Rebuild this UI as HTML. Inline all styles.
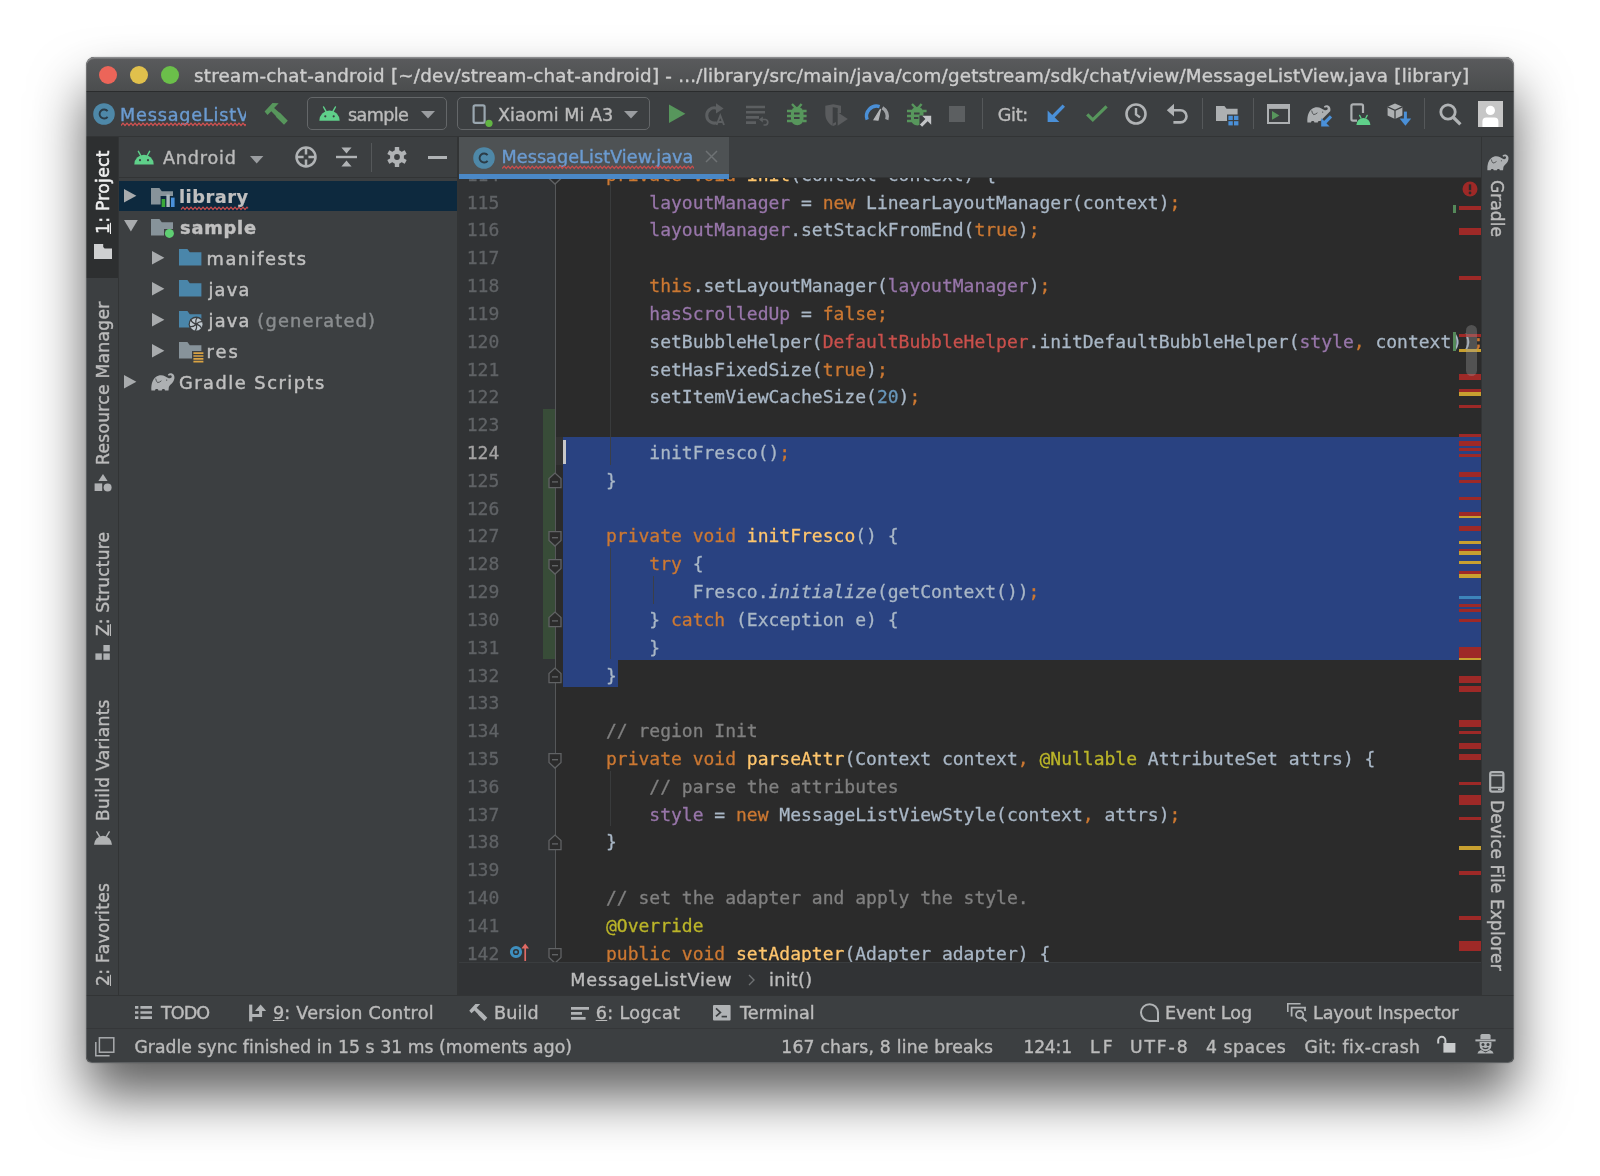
<!DOCTYPE html>
<html>
<head>
<meta charset="utf-8">
<title>MessageListView.java</title>
<style>
html,body{margin:0;padding:0;}
body{width:1600px;height:1176px;background:#fff;overflow:hidden;position:relative;font-family:"DejaVu Sans","Liberation Sans",sans-serif;font-size:17.6px;color:#bbbbbb;}
#shadow{position:absolute;left:86px;top:57px;width:1428px;height:1006px;border-radius:8.5px 8.5px 6px 6px;box-shadow:0 33px 54px rgba(0,0,0,0.63),0 0 1.5px rgba(0,0,0,0.3);}
#win{position:absolute;left:86px;top:57px;width:1428px;height:1006px;border-radius:8.5px 8.5px 6px 6px;overflow:hidden;background:#3c3f41;}
#pg{position:absolute;left:-86px;top:-57px;width:1600px;height:1176px;will-change:transform;-webkit-text-stroke:0.3px;}
.a{position:absolute;}
.t{position:absolute;white-space:nowrap;line-height:22px;height:22px;-webkit-text-stroke:0.4px;}
svg{position:absolute;overflow:visible;}
/* title */
#title{left:86px;top:57px;width:1428px;height:34px;background:linear-gradient(#5a5b5d,#4b4d4e);}
#titletxt{left:194px;top:64.8px;font-size:18.3px;color:#cdcdcd;}
.tl{position:absolute;width:18px;height:18px;border-radius:50%;top:66px;}
/* toolbar */
#toolbar{left:86px;top:92px;width:1428px;height:44px;background:#3c3f41;}
.combo{position:absolute;top:97px;height:33px;border:1.5px solid #646769;border-radius:5px;box-sizing:border-box;}
.sep{position:absolute;width:1px;background:#55585a;}
/* stripes */
.vt{position:absolute;white-space:nowrap;font-size:17.2px;line-height:20px;height:20px;color:#bbbbbb;transform-origin:0 0;-webkit-text-stroke:0.4px;}
/* tree */
.row{position:absolute;left:119px;width:338px;height:31px;}
.tr{position:absolute;white-space:nowrap;font-size:17.8px;line-height:24px;color:#c0c0c0;-webkit-text-stroke:0.45px;}
/* editor */
#code{position:absolute;left:0;top:0;font-family:"DejaVu Sans Mono","Liberation Mono",monospace;font-size:18px;color:#a9b7c6;}
.ln{position:absolute;left:459px;width:40.3px;text-align:right;color:#606366;font-family:"DejaVu Sans Mono",monospace;font-size:18px;line-height:28px;height:28px;white-space:pre;}
.cl{position:absolute;left:562.6px;white-space:pre;line-height:28px;height:28px;font-family:"DejaVu Sans Mono",monospace;font-size:18px;color:#a9b7c6;}
.k{color:#cc7832;}.f{color:#9876aa;}.n{color:#6897bb;}.c{color:#808080;}.an{color:#bbb529;}.m{color:#ffc66d;}.e{color:#c9504c;}.i{font-style:italic;}
.es{position:absolute;left:1459px;width:22px;background:#9e2927;}
.ey{background:#c9a227;}
.bt{position:absolute;white-space:nowrap;font-size:17.6px;line-height:22px;color:#bbbbbb;-webkit-text-stroke:0.4px;}
</style>
</head>
<body>
<div id="shadow"></div>
<div id="win"><div id="pg">

<!-- TITLE BAR -->
<div id="title" class="a"></div>
<div class="a" style="left:86px;top:90.7px;width:1428px;height:1.8px;background:#2a2c2d;"></div>
<div class="tl" style="left:99px;background:#ec6559;"></div>
<div class="tl" style="left:130px;background:#e0c04c;"></div>
<div class="tl" style="left:161px;background:#6bbf4a;"></div>
<div id="titletxt" class="t" style="left:194.00px;letter-spacing:0.226px;">stream-chat-android [~/dev/stream-chat-android] - .../library/src/main/java/com/getstream/sdk/chat/view/MessageListView.java [library]</div>

<!-- TOOLBAR -->
<div id="toolbar" class="a"></div>
<div class="a" style="left:86px;top:136px;width:1428px;height:1px;background:#323435;"></div>
<!-- class icon -->
<svg style="left:93px;top:103px;" width="22" height="22" viewBox="0 0 22 22"><circle cx="11" cy="11" r="10.8" fill="#4e88a8"/><path d="M14.6 8.2 A4.5 4.5 0 1 0 14.6 13.8" fill="none" stroke="#2b3c47" stroke-width="1.9"/></svg>
<div class="a" style="left:119px;top:100px;width:127px;height:30px;overflow:hidden;"><div class="t" id="tbc" style="left:1.00px;top:3.5px;color:#6b9bd1;font-size:17.6px;letter-spacing:0.833px;">MessageListView</div></div>
<svg style="left:121px;top:122px;overflow:hidden;" width="125" height="5" viewBox="0 0 125 5"><path id="wv" d="M0 3.5 l2 -2.4 l2 2.4 l2 -2.4 l2 2.4 l2 -2.4 l2 2.4 l2 -2.4 l2 2.4 l2 -2.4 l2 2.4 l2 -2.4 l2 2.4 l2 -2.4 l2 2.4 l2 -2.4 l2 2.4 l2 -2.4 l2 2.4 l2 -2.4 l2 2.4 l2 -2.4 l2 2.4 l2 -2.4 l2 2.4 l2 -2.4 l2 2.4 l2 -2.4 l2 2.4 l2 -2.4 l2 2.4 l2 -2.4 l2 2.4 l2 -2.4 l2 2.4 l2 -2.4 l2 2.4 l2 -2.4 l2 2.4 l2 -2.4 l2 2.4 l2 -2.4 l2 2.4 l2 -2.4 l2 2.4 l2 -2.4 l2 2.4 l2 -2.4 l2 2.4 l2 -2.4 l2 2.4 l2 -2.4 l2 2.4 l2 -2.4 l2 2.4 l2 -2.4 l2 2.4 l2 -2.4 l2 2.4 l2 -2.4 l2 2.4 l2 -2.4 l2 2.4 l1 -1.2" fill="none" stroke="#d25252" stroke-width="1.2"/></svg>
<!-- hammer -->
<svg style="left:263px;top:102px;" width="27" height="24" viewBox="0 0 27 24"><path d="M1.6 9.6 L9.5 1 L15.7 1.2 L11.1 5.9 L15.6 10 L17.2 10.9 L24.8 18.8 L21 22.8 L13.4 15.3 L12.6 13.8 L8.3 9.3 L4.5 13 Z" fill="#57965c"/></svg>
<!-- combo sample -->
<div class="combo" style="left:307px;width:140px;"></div>
<svg style="left:319px;top:106px;" width="21" height="15" viewBox="0 0 21 15"><path d="M0.3 14.8 A10.2 10.2 0 0 1 20.7 14.8 Z" fill="#5fd08a"/><path d="M4.6 1 L7 5.4 M16.4 1 L14 5.4" stroke="#5fd08a" stroke-width="1.5" stroke-linecap="round"/><circle cx="6.3" cy="10.3" r="1.1" fill="#3c3f41"/><circle cx="14.7" cy="10.3" r="1.1" fill="#3c3f41"/></svg>
<div class="t" id="cs" style="left:348.00px;top:103.5px;font-size:17.6px;letter-spacing:-0.628px;">sample</div>
<svg style="left:421px;top:111px;" width="14" height="8" viewBox="0 0 14 8"><path d="M0 0 H14 L7 7.6 Z" fill="#9a9da0"/></svg>
<!-- combo device -->
<div class="combo" style="left:457px;width:193px;"></div>
<svg style="left:472px;top:104px;" width="22" height="24" viewBox="0 0 22 24"><rect x="1.6" y="1.3" width="11" height="17.6" rx="1.6" fill="none" stroke="#9aa7b0" stroke-width="2.2"/><circle cx="17" cy="19.3" r="3.6" fill="#62b543"/></svg>
<div class="t" id="cd" style="left:498.00px;top:103.5px;font-size:17.6px;letter-spacing:0.018px;">Xiaomi Mi A3</div>
<svg style="left:624px;top:111px;" width="14" height="8" viewBox="0 0 14 8"><path d="M0 0 H14 L7 7.6 Z" fill="#9a9da0"/></svg>
<!-- run -->
<svg style="left:669px;top:104px;" width="17" height="20" viewBox="0 0 17 20"><path d="M0 0.6 L16.4 9.8 L0 19 Z" fill="#57965c"/></svg>
<!-- rerun (disabled) -->
<svg style="left:704px;top:103px;" width="23" height="23" viewBox="0 0 23 23"><path d="M12.5 5.2 A7.6 7.6 0 1 0 13 19.6" fill="none" stroke="#5c5f61" stroke-width="3"/><path d="M12 0.2 L19.6 5.4 L12 10.6 Z" fill="#5c5f61"/><path d="M12.6 22 L16.3 12.6 L20 22 M14 19 H18.6" fill="none" stroke="#5c5f61" stroke-width="1.9"/></svg>
<!-- lines icon (disabled) -->
<svg style="left:746px;top:105px;" width="24" height="21" viewBox="0 0 24 21"><path d="M0 2 H19 M0 7.2 H19 M0 12.4 H13 M0 17.6 H10" stroke="#5c5f61" stroke-width="2.6"/><path d="M14.5 14.5 H19.5 A2.8 2.8 0 0 1 19.5 20 H17.5" fill="none" stroke="#5c5f61" stroke-width="1.7"/><path d="M16.8 11.4 L13 14.6 L16.8 17.6 Z" fill="#5c5f61"/></svg>
<!-- debug bug -->
<svg style="left:786.5px;top:103px;" width="20" height="23" viewBox="0 0 20 23" id="bug"><rect x="4" y="3.8" width="12.5" height="18.5" rx="6.2" fill="#57965c"/><path d="M5 1 L8.6 4.8 M14.6 1 L11.4 4.8 M0 8 H5 M15.5 8 H19.6 M0 13 H5 M15.5 13 H19.6 M0 18 H5 M15.5 18 H19.6" stroke="#57965c" stroke-width="2.4"/><path d="M7 10.5 H12.6 M7 15 H12.6" stroke="#3c3f41" stroke-width="1.8"/></svg>
<!-- coverage (disabled) -->
<svg style="left:825px;top:104px;" width="24" height="23" viewBox="0 0 24 23"><path d="M0.3 1.8 L8.2 0.3 L16 1.8 V9 H12.7 V4 L8.2 3.2 L7.7 3.3 V22 C3 19.4 0.3 15 0.3 9.5 Z" fill="#5a5c5e"/><path d="M8 19.6 L11 18 V20.4 L8.2 22.2 Z" fill="#5a5c5e"/><path d="M12.7 8.2 L22.8 15 L12.7 21.8 Z" fill="#5a5c5e"/></svg>
<!-- profiler -->
<svg style="left:865px;top:104px;" width="24" height="17" viewBox="0 0 24 17"><path d="M2.2 15.6 A10 10 0 0 1 14.6 2.6" fill="none" stroke="#4a8fd6" stroke-width="3.4"/><path d="M17.4 3.8 A10 10 0 0 1 21.8 15.6" fill="none" stroke="#9da0a3" stroke-width="3.4"/><path d="M9 15.8 L15.6 5 L13 16.2 Z" fill="#b4b6b8" stroke="#b4b6b8" stroke-width="1.2"/></svg>
<!-- attach debugger -->
<svg style="left:906.5px;top:103px;" width="25" height="24" viewBox="0 0 25 24"><path d="M4 10 A6.2 6.2 0 0 1 16.5 10 V12.4 H12.4 V22 A6.2 6.2 0 0 1 4 16.1 Z" fill="#57965c"/><path d="M5 1 L8.6 4.8 M14.6 1 L11.4 4.8 M0 8 H5 M15.5 8 H19.6 M0 13 H5 M0 18 H5" stroke="#57965c" stroke-width="2.4"/><path d="M7 10.5 H12.6 M7 15 H11.4" stroke="#3c3f41" stroke-width="1.8"/><path d="M14 22.6 L21 15.6" stroke="#c4c6c8" stroke-width="3.2"/><path d="M15.2 12.8 H24.2 V21.8 Z" fill="#c4c6c8"/></svg>
<!-- stop (disabled) -->
<div class="a" style="left:949px;top:106px;width:16px;height:15.5px;background:#5c5f61;"></div>
<div class="sep" style="left:982px;top:98px;height:31px;"></div>
<div class="t" id="git" style="left:997.70px;top:103.5px;font-size:17.6px;letter-spacing:-0.273px;">Git:</div>
<!-- update (blue arrow) -->
<svg style="left:1047px;top:104px;" width="19" height="19" viewBox="0 0 19 19"><path d="M16.8 1.6 L4.4 14.2" stroke="#4a90d8" stroke-width="3.4"/><path d="M0.6 6.4 V18 H12.4 Z" fill="#4a90d8"/></svg>
<!-- commit check -->
<svg style="left:1086px;top:105px;" width="22" height="17" viewBox="0 0 22 17"><path d="M1.2 9.4 L6.8 14.8 L20.6 1.4" fill="none" stroke="#57965c" stroke-width="3.2"/></svg>
<!-- history clock -->
<svg style="left:1125px;top:103px;" width="22" height="22" viewBox="0 0 22 22"><circle cx="11" cy="11" r="9.5" fill="none" stroke="#b0b3b5" stroke-width="2.6"/><path d="M11 5 V11.4 L15 14.4" fill="none" stroke="#b0b3b5" stroke-width="2.4"/></svg>
<!-- revert -->
<svg style="left:1166px;top:103px;" width="23" height="22" viewBox="0 0 23 22"><path d="M4 7.2 H14.4 A6 6 0 0 1 14.4 19.4 H7.4" fill="none" stroke="#b0b3b5" stroke-width="2.6"/><path d="M8 0.8 L0.8 7.2 L8 13.6 Z" fill="#b0b3b5"/></svg>
<div class="sep" style="left:1202px;top:98px;height:31px;"></div>
<!-- project structure folder -->
<svg style="left:1216px;top:105px;" width="23" height="21" viewBox="0 0 23 21"><path d="M0 1 H8.4 L10.6 3.8 H21.6 V9.6 H11 V16 H0 Z" fill="#adb0b2"/><rect x="12.4" y="10.8" width="4.4" height="4.2" fill="#4a90d8"/><rect x="18" y="10.8" width="4.4" height="4.2" fill="#4a90d8"/><rect x="12.4" y="16.2" width="4.4" height="4.2" fill="#4a90d8"/><rect x="18" y="16.2" width="4.4" height="4.2" fill="#4a90d8"/></svg>
<div class="sep" style="left:1253px;top:98px;height:31px;"></div>
<!-- run anything -->
<svg style="left:1267px;top:104px;" width="23" height="20" viewBox="0 0 23 20"><rect x="1" y="1" width="21" height="18" fill="none" stroke="#adb0b2" stroke-width="2"/><path d="M1 3.4 H22" stroke="#adb0b2" stroke-width="3"/><path d="M5 7 L12.4 11.4 L5 15.8 Z" fill="#57965c"/></svg>
<!-- gradle sync elephant -->
<svg style="left:1306.5px;top:105px;" width="25" height="22" viewBox="0 0 25 22"><path d="M0.4 17.4 C0 11 1.6 6.6 4.8 4 C7.6 1.8 11.6 1.8 14.4 3.4 C15.4 4 16 4.5 16.8 4.7 C18 5.6 19.6 5.6 20.4 4.6 C21.2 3.6 20.6 2.4 19.6 2.2 C18.8 2.1 18.2 2.5 17.6 2.7 L16.9 1.4 C18 0.4 19.6 0 21 0.5 C23 1.2 23.8 3.4 23.4 5.4 C23 8 21.4 10 19.4 11.8 C18.4 12.8 18 13.6 17.8 14.6 L17.5 17.4 H14 C13.9 15.6 11 15.6 10.8 17.4 H7.4 C7.2 15.6 4.2 15.6 4 17.4 Z" fill="#adb0b2"/><path d="M4.7 5.6 C5 7.4 5.6 8.6 6.6 9.6 C8 9.4 9.4 8.8 10.4 7.8" fill="none" stroke="#3c3f41" stroke-width="0.8"/><circle cx="15.7" cy="7.1" r="0.6" fill="#3c3f41"/><path d="M25.5 9 L12 22.5" stroke="#3c3f41" stroke-width="7.4"/><path d="M24 11.4 L17.4 18" stroke="#4a90d8" stroke-width="3.2"/><path d="M14.2 13 V21.4 H22.6 Z" fill="#4a90d8"/></svg>
<!-- AVD manager -->
<svg style="left:1350px;top:103px;" width="21" height="23" viewBox="0 0 21 23"><path d="M7 17.6 H3 A1.6 1.6 0 0 1 1.4 16 V3 A1.6 1.6 0 0 1 3 1.4 H11.4 A1.6 1.6 0 0 1 13 3 V10" fill="none" stroke="#adb0b2" stroke-width="2.2"/><path d="M6.4 22 A7 7 0 0 1 20.4 22 Z" fill="#5fd08a"/><path d="M9.6 12.4 L11 15 M17.2 12.4 L15.8 15" stroke="#5fd08a" stroke-width="1.3" stroke-linecap="round"/></svg>
<!-- SDK manager -->
<svg style="left:1387px;top:103px;" width="25" height="24" viewBox="0 0 25 24"><path d="M8 0.4 L15.4 3.8 V12.4 L8 16 L0.6 12.4 V3.8 Z" fill="#adb0b2"/><path d="M0.6 3.8 L8 7.4 L15.4 3.8 M8 7.4 V16" fill="none" stroke="#3c3f41" stroke-width="1.3"/><path d="M18.4 8.6 V17.6" stroke="#4a90d8" stroke-width="3"/><path d="M12.6 15.6 H24.2 L18.4 22.8 Z" fill="#4a90d8"/></svg>
<div class="sep" style="left:1424px;top:98px;height:31px;"></div>
<!-- search -->
<svg style="left:1439px;top:103px;" width="23" height="23" viewBox="0 0 23 23"><circle cx="9" cy="9" r="7.2" fill="none" stroke="#b0b3b5" stroke-width="2.8"/><path d="M14 14 L21.4 21.4" stroke="#b0b3b5" stroke-width="3.2"/></svg>
<!-- avatar -->
<div class="a" style="left:1478px;top:101px;width:25px;height:26px;background:#c6c6c6;overflow:hidden;"><svg style="left:0;top:0;" width="25" height="26" viewBox="0 0 25 26"><circle cx="12.4" cy="9.4" r="4.6" fill="#fff"/><path d="M4.4 26 V20.6 A4 4 0 0 1 8.4 16.6 H16.4 A4 4 0 0 1 20.4 20.6 V26 Z" fill="#fff"/></svg></div>


<!-- LEFT STRIPE -->
<div class="a" style="left:86px;top:137px;width:32px;height:859px;background:#3c3f41;"></div>
<div class="a" style="left:118px;top:137px;width:1px;height:859px;background:#323435;"></div>
<div class="a" style="left:86px;top:137px;width:32px;height:141px;background:#2d2f30;"></div>
<div class="vt" id="v1" style="left:93px;top:234px;transform:rotate(-90deg);color:#efefef;-webkit-text-stroke:0.5px;letter-spacing:0.272px;"><u>1</u>: Project</div>
<svg style="left:94px;top:244px;" width="18" height="15" viewBox="0 0 18 15"><path d="M0 0 H9.2 V3 L10.6 4.4 H18 V15 H0 Z" fill="#cfd0d1"/></svg>
<div class="vt" id="v2" style="left:93px;top:465px;transform:rotate(-90deg);letter-spacing:0.243px;">Resource Manager</div>
<svg style="left:94px;top:474px;" width="18" height="18" viewBox="0 0 18 18"><path d="M9 0 L13.6 7 H4.4 Z" fill="#afb1b3"/><rect x="0.6" y="9.4" width="7.6" height="7.6" fill="#afb1b3"/><circle cx="13.6" cy="13.4" r="4" fill="#afb1b3"/></svg>
<div class="vt" id="v3" style="left:93px;top:636px;transform:rotate(-90deg);letter-spacing:0.090px;"><u>Z</u>: Structure</div>
<svg style="left:95px;top:645px;" width="15" height="15" viewBox="0 0 15 15"><rect x="8.4" y="0" width="6.4" height="6.4" fill="#afb1b3"/><rect x="0.4" y="8.4" width="6.4" height="6.4" fill="#afb1b3"/><rect x="8.4" y="8.4" width="6.4" height="6.4" fill="#afb1b3"/></svg>
<div class="vt" id="v4" style="left:93px;top:821px;transform:rotate(-90deg);letter-spacing:0.233px;">Build Variants</div>
<svg style="left:93.8px;top:830.6px;" width="18" height="14" viewBox="0 0 18 14"><path d="M0 13.8 A9 9 0 0 1 18 13.8 Z" fill="#b0b2b3"/><path d="M2.8 0.9 L5.6 5.6 M15.2 0.9 L12.4 5.6" stroke="#b0b2b3" stroke-width="1.5" stroke-linecap="round"/></svg>
<div class="vt" id="v5" style="left:93px;top:986px;transform:rotate(-90deg);letter-spacing:0.284px;"><u>2</u>: Favorites</div>


<!-- PROJECT PANEL -->
<div class="a" style="left:119px;top:137px;width:338px;height:859px;background:#3c3f41;"></div>
<div class="a" style="left:457px;top:137px;width:2px;height:859px;background:#323435;"></div>
<div class="a" style="left:119px;top:177px;width:338px;height:1px;background:#323435;"></div>
<!-- header -->
<svg style="left:134px;top:150px;" width="20" height="15" viewBox="0 0 21 15"><path d="M0.3 14.8 A10.2 10.2 0 0 1 20.7 14.8 Z" fill="#5fd08a"/><path d="M4.6 1 L7 5.4 M16.4 1 L14 5.4" stroke="#5fd08a" stroke-width="1.5" stroke-linecap="round"/><circle cx="6.3" cy="10.3" r="1.1" fill="#3c3f41"/><circle cx="14.7" cy="10.3" r="1.1" fill="#3c3f41"/></svg>
<div class="t" id="pa" style="left:163.00px;top:147px;font-size:17.6px;letter-spacing:0.824px;">Android</div>
<svg style="left:250px;top:156px;" width="14" height="8" viewBox="0 0 14 8"><path d="M0 0 H13.4 L6.7 7.6 Z" fill="#9a9da0"/></svg>
<svg style="left:295px;top:146px;" width="22" height="22" viewBox="0 0 22 22"><circle cx="11" cy="11" r="9.5" fill="none" stroke="#b0b3b5" stroke-width="2.5"/><path d="M11 1 V8.6 M11 13.4 V21 M1 11 H8.6 M13.4 11 H21" stroke="#b0b3b5" stroke-width="2.5"/></svg>
<svg style="left:336px;top:147px;" width="21" height="20" viewBox="0 0 21 20"><path d="M0 10 H21" stroke="#b0b3b5" stroke-width="2.4"/><path d="M5.4 0.4 H15.6 L10.5 6.4 Z M5.4 19.6 H15.6 L10.5 13.6 Z" fill="#b0b3b5"/></svg>
<div class="sep" style="left:371px;top:143px;height:29px;"></div>
<svg style="left:387px;top:147px;" width="20" height="20" viewBox="-10 -10 20 20"><g fill="#b0b3b5"><circle r="7"/><rect x="-2.2" y="-10" width="4.4" height="20" rx="0.6"/><rect x="-2.2" y="-10" width="4.4" height="20" rx="0.6" transform="rotate(60)"/><rect x="-2.2" y="-10" width="4.4" height="20" rx="0.6" transform="rotate(120)"/></g><circle r="2.9" fill="#3c3f41"/></svg>
<div class="a" style="left:428px;top:156px;width:19px;height:2.6px;background:#b0b3b5;"></div>
<!-- tree -->
<div class="row" style="top:181px;height:30px;background:#0d293e;"></div>
<svg style="left:124px;top:188.5px;" width="13" height="14" viewBox="0 0 13 14"><path d="M0 0 L12.4 6.8 L0 13.6 Z" fill="#a8abad"/></svg>
<svg style="left:151px;top:188px;" width="24" height="19" viewBox="0 0 24 19"><path d="M0 0 H8.4 L10.8 3.2 H22 V8 H9.6 V16.4 H0 Z" fill="#87939a"/><rect x="10.6" y="11" width="3.6" height="8" fill="#3aa83a"/><rect x="15.4" y="6.6" width="3.4" height="12.4" fill="#aeb9c0"/><rect x="20" y="9.6" width="3.6" height="9.4" fill="#4a90d8"/></svg>
<div class="tr" id="t1" style="left:179.00px;top:185px;font-weight:bold;-webkit-text-stroke:0.2px;letter-spacing:0.491px;">library</div>
<svg style="left:180px;top:205.5px;overflow:hidden;" width="71" height="5" viewBox="0 0 69 5"><path d="M0 3.5 l2 -2.4 l2 2.4 l2 -2.4 l2 2.4 l2 -2.4 l2 2.4 l2 -2.4 l2 2.4 l2 -2.4 l2 2.4 l2 -2.4 l2 2.4 l2 -2.4 l2 2.4 l2 -2.4 l2 2.4 l2 -2.4 l2 2.4 l2 -2.4 l2 2.4 l2 -2.4 l2 2.4 l2 -2.4 l2 2.4 l2 -2.4 l2 2.4 l2 -2.4 l2 2.4 l2 -2.4 l2 2.4 l2 -2.4 l2 2.4 l2 -2.4 l1 1.2" fill="none" stroke="#c94d4d" stroke-width="1.2"/></svg>

<svg style="left:123.5px;top:219.5px;" width="14" height="12" viewBox="0 0 14 12"><path d="M0 0 H13.8 L6.9 11.6 Z" fill="#a8abad"/></svg>
<svg style="left:151px;top:219px;" width="24" height="19" viewBox="0 0 24 19"><path d="M0 0 H8.4 L10.8 3.2 H22 V10 H13 V16.4 H0 Z" fill="#87939a"/><circle cx="18.4" cy="14.4" r="4.5" fill="#5fcf73"/></svg>
<div class="tr" id="t2" style="left:180.00px;top:216px;font-weight:bold;letter-spacing:0.813px;">sample</div>

<svg style="left:151.5px;top:250.5px;" width="13" height="14" viewBox="0 0 13 14"><path d="M0 0 L12.4 6.8 L0 13.6 Z" fill="#a8abad"/></svg>
<svg style="left:179px;top:249px;" width="23" height="17" viewBox="0 0 23 17"><path d="M0 0 H8.4 L10.8 3.2 H22.4 V16.6 H0 Z" fill="#4a86aa"/></svg>
<div class="tr" id="t3" style="left:206.50px;top:247px;letter-spacing:1.555px;">manifests</div>

<svg style="left:151.5px;top:281.5px;" width="13" height="14" viewBox="0 0 13 14"><path d="M0 0 L12.4 6.8 L0 13.6 Z" fill="#a8abad"/></svg>
<svg style="left:179px;top:280px;" width="23" height="17" viewBox="0 0 23 17"><path d="M0 0 H8.4 L10.8 3.2 H22.4 V16.6 H0 Z" fill="#4a86aa"/></svg>
<div class="tr" id="t4" style="left:208.50px;top:278px;letter-spacing:1.180px;">java</div>

<svg style="left:151.5px;top:312.5px;" width="13" height="14" viewBox="0 0 13 14"><path d="M0 0 L12.4 6.8 L0 13.6 Z" fill="#a8abad"/></svg>
<svg style="left:179px;top:311px;" width="25" height="20" viewBox="0 0 25 20"><path d="M0 0 H8.4 L10.8 3.2 H22.4 V8 H11 V16.6 H0 Z" fill="#4a86aa"/><g transform="translate(17.2 13.2)"><circle r="7.6" fill="#3c3f41"/><circle r="6.3" fill="#c0c9cf"/><g stroke="#3c3f41" stroke-width="1.25" fill="none"><path d="M0 0 C1.6 -1.6 3.6 -3 6.2 -2.4"/><path d="M0 0 C1.6 -1.6 3.6 -3 6.2 -2.4" transform="rotate(60)"/><path d="M0 0 C1.6 -1.6 3.6 -3 6.2 -2.4" transform="rotate(120)"/><path d="M0 0 C1.6 -1.6 3.6 -3 6.2 -2.4" transform="rotate(180)"/><path d="M0 0 C1.6 -1.6 3.6 -3 6.2 -2.4" transform="rotate(240)"/><path d="M0 0 C1.6 -1.6 3.6 -3 6.2 -2.4" transform="rotate(300)"/></g><circle r="1.3" fill="#3c3f41"/></g></svg>
<div class="tr" id="t5" style="left:208.50px;top:309px;letter-spacing:1.188px;">java <span style="color:#8a8d8f">(generated)</span></div>

<svg style="left:151.5px;top:343.5px;" width="13" height="14" viewBox="0 0 13 14"><path d="M0 0 L12.4 6.8 L0 13.6 Z" fill="#a8abad"/></svg>
<svg style="left:179px;top:342px;" width="25" height="21" viewBox="0 0 25 21"><path d="M0 0 H8.4 L10.8 3.2 H22.4 V9 H13 V16.6 H0 Z" fill="#87939a"/><path d="M14.4 11.2 H24.4 M14.4 14 H24.4 M14.4 16.8 H24.4 M14.4 19.6 H24.4" stroke="#d9a343" stroke-width="1.7"/></svg>
<div class="tr" id="t6" style="left:206.50px;top:340px;letter-spacing:2.020px;">res</div>

<svg style="left:124px;top:374.5px;" width="13" height="14" viewBox="0 0 13 14"><path d="M0 0 L12.4 6.8 L0 13.6 Z" fill="#a8abad"/></svg>
<svg style="left:150.5px;top:372.6px;" width="24" height="18" viewBox="0 0 24 18"><path d="M0.4 17.4 C0 11 1.6 6.6 4.8 4 C7.6 1.8 11.6 1.8 14.4 3.4 C15.4 4 16 4.5 16.8 4.7 C18 5.6 19.6 5.6 20.4 4.6 C21.2 3.6 20.6 2.4 19.6 2.2 C18.8 2.1 18.2 2.5 17.6 2.7 L16.9 1.4 C18 0.4 19.6 0 21 0.5 C23 1.2 23.8 3.4 23.4 5.4 C23 8 21.4 10 19.4 11.8 C18.4 12.8 18 13.6 17.8 14.6 L17.5 17.4 H14 C13.9 15.6 11 15.6 10.8 17.4 H7.4 C7.2 15.6 4.2 15.6 4 17.4 Z" fill="#adb0b2"/><path d="M4.7 5.6 C5 7.4 5.6 8.6 6.6 9.6 C8 9.4 9.4 8.8 10.4 7.8" fill="none" stroke="#3c3f41" stroke-width="0.8"/><circle cx="15.7" cy="7.1" r="0.6" fill="#3c3f41"/></svg>
<div class="tr" id="t7" style="left:179.00px;top:371px;letter-spacing:1.509px;">Gradle Scripts</div>


<!-- EDITOR -->
<div class="a" style="left:459px;top:137px;width:1023px;height:40px;background:#3c3f41;"></div>
<div class="a" style="left:459px;top:177px;width:1023px;height:1px;background:#323435;"></div>
<div class="a" style="left:459px;top:137px;width:270px;height:40px;background:#4e5254;"></div>
<div class="a" style="left:459px;top:173.7px;width:270px;height:5.2px;background:#4a88c7;z-index:3;"></div>
<svg style="left:472.5px;top:146.5px;" width="22" height="22" viewBox="0 0 22 22"><circle cx="11" cy="11" r="10.8" fill="#4e88a8"/><path d="M14.6 8.2 A4.5 4.5 0 1 0 14.6 13.8" fill="none" stroke="#2b3c47" stroke-width="1.9"/></svg>
<div class="t" id="tab" style="left:501.50px;top:146px;color:#6b9bd1;font-size:17.6px;letter-spacing:0.070px;">MessageListView.java</div>
<svg style="left:502px;top:164.5px;overflow:hidden;" width="191.5" height="5" viewBox="0 0 191 5"><path d="M0 3.5 l2 -2.4 l2 2.4 l2 -2.4 l2 2.4 l2 -2.4 l2 2.4 l2 -2.4 l2 2.4 l2 -2.4 l2 2.4 l2 -2.4 l2 2.4 l2 -2.4 l2 2.4 l2 -2.4 l2 2.4 l2 -2.4 l2 2.4 l2 -2.4 l2 2.4 l2 -2.4 l2 2.4 l2 -2.4 l2 2.4 l2 -2.4 l2 2.4 l2 -2.4 l2 2.4 l2 -2.4 l2 2.4 l2 -2.4 l2 2.4 l2 -2.4 l2 2.4 l2 -2.4 l2 2.4 l2 -2.4 l2 2.4 l2 -2.4 l2 2.4 l2 -2.4 l2 2.4 l2 -2.4 l2 2.4 l2 -2.4 l2 2.4 l2 -2.4 l2 2.4 l2 -2.4 l2 2.4 l2 -2.4 l2 2.4 l2 -2.4 l2 2.4 l2 -2.4 l2 2.4 l2 -2.4 l2 2.4 l2 -2.4 l2 2.4 l2 -2.4 l2 2.4 l2 -2.4 l2 2.4 l2 -2.4 l2 2.4 l2 -2.4 l2 2.4 l2 -2.4 l2 2.4 l2 -2.4 l2 2.4 l2 -2.4 l2 2.4 l2 -2.4 l2 2.4 l2 -2.4 l2 2.4 l2 -2.4 l2 2.4 l2 -2.4 l2 2.4 l2 -2.4 l2 2.4 l2 -2.4 l2 2.4 l2 -2.4 l2 2.4 l2 -2.4 l2 2.4 l2 -2.4 l2 2.4 l2 -2.4 l2 2.4 l2 -2.4 l2 2.4 l2 -2.4 l2 2.4 l2 -2.4 l1 1.2" fill="none" stroke="#c94d4d" stroke-width="1.2"/></svg>
<svg style="left:705px;top:150px;" width="13" height="13" viewBox="0 0 13 13"><path d="M1 1 L12 12 M12 1 L1 12" stroke="#6e7274" stroke-width="1.5"/></svg>

<div class="a" style="left:459px;top:178px;width:1023px;height:785px;background:#2b2b2b;overflow:hidden;" id="ed">
<div class="a" style="left:-459px;top:-178px;width:1600px;height:1176px;" id="edpg">
<div class="a" style="left:459px;top:178px;width:97px;height:785px;background:#313335;"></div>
<div class="a" style="left:554.6px;top:178px;width:1.4px;height:785px;background:#555759;"></div>
<div class="a" style="left:543px;top:409.2px;width:12px;height:250.3px;background:#384c38;"></div>
<div class="a" style="left:556px;top:437.0px;width:7px;height:27.8px;background:#323232;"></div>
<div class="a" style="left:562.5px;top:437.0px;width:919.5px;height:222.5px;background:#294281;"></div>
<div class="a" style="left:562.5px;top:659.0px;width:55px;height:28.3px;background:#294281;"></div>
<div class="a" style="left:610px;top:131.1px;width:1px;height:305.9px;background:#393b3c;"></div>
<div class="a" style="left:610px;top:437.0px;width:1px;height:27.8px;background:#3b3f48;"></div>
<div class="a" style="left:610px;top:548.3px;width:1px;height:111.2px;background:#3b3f48;"></div>
<div class="a" style="left:653px;top:576.1px;width:1px;height:27.8px;background:#3b3f48;"></div>
<div class="a" style="left:610px;top:770.8px;width:1px;height:55.6px;background:#393b3c;"></div>
<div class="a" style="left:562.6px;top:440.0px;width:3.2px;height:23.5px;background:#c8c8c8;"></div>
<div class="ln" style="top:160.8px;color:#606366;">114</div>
<div class="cl" style="top:160.8px;">    <span class="k">private void </span><span class="m">init</span>(Context context) {</div>
<div class="ln" style="top:188.6px;color:#606366;">115</div>
<div class="cl" style="top:188.6px;">        <span class="f">layoutManager</span> = <span class="k">new </span>LinearLayoutManager(context)<span class="k">;</span></div>
<div class="ln" style="top:216.4px;color:#606366;">116</div>
<div class="cl" style="top:216.4px;">        <span class="f">layoutManager</span>.setStackFromEnd(<span class="k">true</span>)<span class="k">;</span></div>
<div class="ln" style="top:244.2px;color:#606366;">117</div>
<div class="ln" style="top:272.0px;color:#606366;">118</div>
<div class="cl" style="top:272.0px;">        <span class="k">this</span>.setLayoutManager(<span class="f">layoutManager</span>)<span class="k">;</span></div>
<div class="ln" style="top:299.9px;color:#606366;">119</div>
<div class="cl" style="top:299.9px;">        <span class="f">hasScrolledUp</span> = <span class="k">false;</span></div>
<div class="ln" style="top:327.7px;color:#606366;">120</div>
<div class="cl" style="top:327.7px;">        setBubbleHelper(<span class="e">DefaultBubbleHelper</span>.initDefaultBubbleHelper(<span class="f">style</span><span class="k">, </span>context))<span class="k">;</span></div>
<div class="ln" style="top:355.5px;color:#606366;">121</div>
<div class="cl" style="top:355.5px;">        setHasFixedSize(<span class="k">true</span>)<span class="k">;</span></div>
<div class="ln" style="top:383.3px;color:#606366;">122</div>
<div class="cl" style="top:383.3px;">        setItemViewCacheSize(<span class="n">20</span>)<span class="k">;</span></div>
<div class="ln" style="top:411.1px;color:#606366;">123</div>
<div class="ln" style="top:438.9px;color:#a4a3a3;">124</div>
<div class="cl" style="top:438.9px;">        initFresco()<span class="k">;</span></div>
<div class="ln" style="top:466.8px;color:#606366;">125</div>
<div class="cl" style="top:466.8px;">    }</div>
<div class="ln" style="top:494.6px;color:#606366;">126</div>
<div class="ln" style="top:522.4px;color:#606366;">127</div>
<div class="cl" style="top:522.4px;">    <span class="k">private void </span><span class="m">initFresco</span>() {</div>
<div class="ln" style="top:550.2px;color:#606366;">128</div>
<div class="cl" style="top:550.2px;">        <span class="k">try </span>{</div>
<div class="ln" style="top:578.0px;color:#606366;">129</div>
<div class="cl" style="top:578.0px;">            Fresco.<span class="i">initialize</span>(getContext())<span class="k">;</span></div>
<div class="ln" style="top:605.8px;color:#606366;">130</div>
<div class="cl" style="top:605.8px;">        } <span class="k">catch </span>(Exception e) {</div>
<div class="ln" style="top:633.6px;color:#606366;">131</div>
<div class="cl" style="top:633.6px;">        }</div>
<div class="ln" style="top:661.5px;color:#606366;">132</div>
<div class="cl" style="top:661.5px;">    }</div>
<div class="ln" style="top:689.3px;color:#606366;">133</div>
<div class="ln" style="top:717.1px;color:#606366;">134</div>
<div class="cl" style="top:717.1px;">    <span class="c">// region Init</span></div>
<div class="ln" style="top:744.9px;color:#606366;">135</div>
<div class="cl" style="top:744.9px;">    <span class="k">private void </span><span class="m">parseAttr</span>(Context context<span class="k">, </span><span class="an">@Nullable </span>AttributeSet attrs) {</div>
<div class="ln" style="top:772.7px;color:#606366;">136</div>
<div class="cl" style="top:772.7px;">        <span class="c">// parse the attributes</span></div>
<div class="ln" style="top:800.5px;color:#606366;">137</div>
<div class="cl" style="top:800.5px;">        <span class="f">style</span> = <span class="k">new </span>MessageListViewStyle(context<span class="k">, </span>attrs)<span class="k">;</span></div>
<div class="ln" style="top:828.3px;color:#606366;">138</div>
<div class="cl" style="top:828.3px;">    }</div>
<div class="ln" style="top:856.2px;color:#606366;">139</div>
<div class="ln" style="top:884.0px;color:#606366;">140</div>
<div class="cl" style="top:884.0px;">    <span class="c">// set the adapter and apply the style.</span></div>
<div class="ln" style="top:911.8px;color:#606366;">141</div>
<div class="cl" style="top:911.8px;">    <span class="an">@Override</span></div>
<div class="ln" style="top:939.6px;color:#606366;">142</div>
<div class="cl" style="top:939.6px;">    <span class="k">public void </span><span class="m">setAdapter</span>(Adapter adapter) {</div>
<svg style="left:555.2px;top:174.2px;" width="1" height="1"><path d="M-6 -4.3 H6 V4.4 L0 10 L-6 4.4 Z" fill="#2b2b2b" stroke="#606264" stroke-width="1.3"/><path d="M-3 1.7 H3" stroke="#606264" stroke-width="1.4"/></svg>
<svg style="left:555.2px;top:480.2px;" width="1" height="1"><path d="M-6 7.6 H6 V-1.4 L0 -6.9 L-6 -1.4 Z" fill="#2b2b2b" stroke="#606264" stroke-width="1.3"/><path d="M-3 1.9 H3" stroke="#606264" stroke-width="1.4"/></svg>
<svg style="left:555.2px;top:535.8px;" width="1" height="1"><path d="M-6 -4.3 H6 V4.4 L0 10 L-6 4.4 Z" fill="#2b2b2b" stroke="#606264" stroke-width="1.3"/><path d="M-3 1.7 H3" stroke="#606264" stroke-width="1.4"/></svg>
<svg style="left:555.2px;top:563.6px;" width="1" height="1"><path d="M-6 -4.3 H6 V4.4 L0 10 L-6 4.4 Z" fill="#2b2b2b" stroke="#606264" stroke-width="1.3"/><path d="M-3 1.7 H3" stroke="#606264" stroke-width="1.4"/></svg>
<svg style="left:555.2px;top:619.2px;" width="1" height="1"><path d="M-6 7.6 H6 V-1.4 L0 -6.9 L-6 -1.4 Z" fill="#2b2b2b" stroke="#606264" stroke-width="1.3"/><path d="M-3 1.9 H3" stroke="#606264" stroke-width="1.4"/></svg>
<svg style="left:555.2px;top:674.9px;" width="1" height="1"><path d="M-6 7.6 H6 V-1.4 L0 -6.9 L-6 -1.4 Z" fill="#2b2b2b" stroke="#606264" stroke-width="1.3"/><path d="M-3 1.9 H3" stroke="#606264" stroke-width="1.4"/></svg>
<svg style="left:555.2px;top:758.3px;" width="1" height="1"><path d="M-6 -4.3 H6 V4.4 L0 10 L-6 4.4 Z" fill="#2b2b2b" stroke="#606264" stroke-width="1.3"/><path d="M-3 1.7 H3" stroke="#606264" stroke-width="1.4"/></svg>
<svg style="left:555.2px;top:841.7px;" width="1" height="1"><path d="M-6 7.6 H6 V-1.4 L0 -6.9 L-6 -1.4 Z" fill="#2b2b2b" stroke="#606264" stroke-width="1.3"/><path d="M-3 1.9 H3" stroke="#606264" stroke-width="1.4"/></svg>
<svg style="left:555.2px;top:953.0px;" width="1" height="1"><path d="M-6 -4.3 H6 V4.4 L0 10 L-6 4.4 Z" fill="#2b2b2b" stroke="#606264" stroke-width="1.3"/><path d="M-3 1.7 H3" stroke="#606264" stroke-width="1.4"/></svg>
<svg style="left:510px;top:952.0px;" width="1" height="1"><circle cx="6" cy="0" r="4.6" fill="none" stroke="#3e8fbf" stroke-width="3"/><circle cx="6" cy="0" r="1.6" fill="#3e8fbf"/><path d="M15.2 9 V-5" fill="none" stroke="#e06a64" stroke-width="1.7"/><path d="M11.4 -3.4 L15.2 -8.6 L19 -3.4 Z" fill="#e06a64"/></svg>
<div class="a" style="left:1459.0px;top:206.3px;width:22.0px;height:3.6px;background:#9e2927;"></div>
<div class="a" style="left:1459.0px;top:228.2px;width:22.0px;height:6.7px;background:#9e2927;"></div>
<div class="a" style="left:1459.0px;top:276.2px;width:22.0px;height:3.6px;background:#9e2927;"></div>
<div class="a" style="left:1459.0px;top:333.6px;width:22.0px;height:3.3px;background:#9e2927;"></div>
<div class="a" style="left:1459.0px;top:349.2px;width:22.0px;height:3.1px;background:#c8a030;"></div>
<div class="a" style="left:1459.0px;top:374.0px;width:22.0px;height:6.0px;background:#9e2927;"></div>
<div class="a" style="left:1459.0px;top:389.4px;width:22.0px;height:2.4px;background:#9e2927;"></div>
<div class="a" style="left:1459.0px;top:391.8px;width:22.0px;height:4.1px;background:#c8a030;"></div>
<div class="a" style="left:1459.0px;top:405.0px;width:22.0px;height:3.4px;background:#9e2927;"></div>
<div class="a" style="left:1459.0px;top:433.8px;width:22.0px;height:3.3px;background:#9e2927;"></div>
<div class="a" style="left:1459.0px;top:441.4px;width:22.0px;height:4.8px;background:#9e2927;"></div>
<div class="a" style="left:1459.0px;top:447.9px;width:22.0px;height:3.1px;background:#9e2927;"></div>
<div class="a" style="left:1459.0px;top:454.0px;width:22.0px;height:3.4px;background:#9e2927;"></div>
<div class="a" style="left:1459.0px;top:472.4px;width:22.0px;height:4.7px;background:#9e2927;"></div>
<div class="a" style="left:1459.0px;top:480.2px;width:22.0px;height:3.1px;background:#9e2927;"></div>
<div class="a" style="left:1459.0px;top:496.9px;width:22.0px;height:3.6px;background:#9e2927;"></div>
<div class="a" style="left:1459.0px;top:512.4px;width:22.0px;height:3.3px;background:#9e2927;"></div>
<div class="a" style="left:1459.0px;top:515.7px;width:22.0px;height:1.9px;background:#c8a030;"></div>
<div class="a" style="left:1459.0px;top:526.4px;width:22.0px;height:5.0px;background:#9e2927;"></div>
<div class="a" style="left:1459.0px;top:540.5px;width:22.0px;height:3.3px;background:#c8a030;"></div>
<div class="a" style="left:1459.0px;top:548.6px;width:22.0px;height:2.4px;background:#9e2927;"></div>
<div class="a" style="left:1459.0px;top:551.0px;width:22.0px;height:3.8px;background:#c8a030;"></div>
<div class="a" style="left:1459.0px;top:560.5px;width:22.0px;height:3.5px;background:#c8a030;"></div>
<div class="a" style="left:1459.0px;top:571.4px;width:22.0px;height:2.9px;background:#9e2927;"></div>
<div class="a" style="left:1459.0px;top:574.3px;width:22.0px;height:3.6px;background:#c8a030;"></div>
<div class="a" style="left:1459.0px;top:595.7px;width:22.0px;height:3.4px;background:#3d84ba;"></div>
<div class="a" style="left:1459.0px;top:603.8px;width:22.0px;height:3.1px;background:#9e2927;"></div>
<div class="a" style="left:1459.0px;top:608.6px;width:22.0px;height:3.1px;background:#9e2927;"></div>
<div class="a" style="left:1459.0px;top:619.0px;width:22.0px;height:3.4px;background:#9e2927;"></div>
<div class="a" style="left:1459.0px;top:647.4px;width:22.0px;height:10.7px;background:#9e2927;"></div>
<div class="a" style="left:1459.0px;top:658.0px;width:22.0px;height:2.0px;background:#c8a030;"></div>
<div class="a" style="left:1459.0px;top:676.4px;width:22.0px;height:6.2px;background:#9e2927;"></div>
<div class="a" style="left:1459.0px;top:686.0px;width:22.0px;height:6.1px;background:#9e2927;"></div>
<div class="a" style="left:1459.0px;top:719.8px;width:22.0px;height:6.8px;background:#9e2927;"></div>
<div class="a" style="left:1459.0px;top:730.6px;width:22.0px;height:3.2px;background:#9e2927;"></div>
<div class="a" style="left:1459.0px;top:742.8px;width:22.0px;height:6.7px;background:#9e2927;"></div>
<div class="a" style="left:1459.0px;top:753.6px;width:22.0px;height:6.8px;background:#9e2927;"></div>
<div class="a" style="left:1459.0px;top:781.5px;width:22.0px;height:3.4px;background:#9e2927;"></div>
<div class="a" style="left:1459.0px;top:795.3px;width:22.0px;height:9.7px;background:#9e2927;"></div>
<div class="a" style="left:1459.0px;top:816.9px;width:22.0px;height:3.6px;background:#9e2927;"></div>
<div class="a" style="left:1459.0px;top:846.2px;width:22.0px;height:3.6px;background:#c8a030;"></div>
<div class="a" style="left:1459.0px;top:871.0px;width:22.0px;height:3.8px;background:#9e2927;"></div>
<div class="a" style="left:1459.0px;top:915.8px;width:22.0px;height:3.8px;background:#9e2927;"></div>
<div class="a" style="left:1459.0px;top:940.5px;width:22.0px;height:10.0px;background:#9e2927;"></div>
<div class="a" style="left:1452.7px;top:205.2px;width:3.5px;height:7.8px;background:#55895a;"></div>
<div class="a" style="left:1452.7px;top:332.0px;width:3.5px;height:19.0px;background:#55895a;"></div>
<svg style="left:1470px;top:189px;" width="1" height="1"><circle cx="0" cy="0" r="7.5" fill="#9e2927"/><path d="M0 -4.6 V1.2" stroke="#2b2b2b" stroke-width="2.4"/><circle cx="0" cy="4" r="1.4" fill="#2b2b2b"/></svg>
<div class="a" style="left:1466px;top:325.3px;width:10.6px;height:50.6px;border-radius:6px;background:rgba(166,166,166,0.32);"></div>
</div></div>
<!-- BREADCRUMB -->
<div class="a" style="left:459px;top:962px;width:1023px;height:34px;background:#313335;"></div>
<div class="a" style="left:459px;top:962px;width:1023px;height:1px;background:#3a3d3f;"></div>
<div class="bt" id="bc1" style="left:570.20px;top:969px;font-size:17.6px;letter-spacing:0.848px;">MessageListView</div>
<svg style="left:748px;top:974px;" width="7" height="12" viewBox="0 0 7 12"><path d="M1 1 L6 6 L1 11" fill="none" stroke="#6e7173" stroke-width="1.4"/></svg>
<div class="bt" id="bc2" style="left:769.00px;top:969px;font-size:17.6px;letter-spacing:0.302px;">init()</div>


<!-- RIGHT STRIPE -->
<div class="a" style="left:1482px;top:137px;width:32px;height:859px;background:#3c3f41;"></div>
<div class="a" style="left:1481px;top:137px;width:1px;height:859px;background:#323435;"></div>
<svg style="left:1487px;top:154px;" width="22" height="17" viewBox="0 0 24 18"><path d="M0.4 17.4 C0 11 1.6 6.6 4.8 4 C7.6 1.8 11.6 1.8 14.4 3.4 C15.4 4 16 4.5 16.8 4.7 C18 5.6 19.6 5.6 20.4 4.6 C21.2 3.6 20.6 2.4 19.6 2.2 C18.8 2.1 18.2 2.5 17.6 2.7 L16.9 1.4 C18 0.4 19.6 0 21 0.5 C23 1.2 23.8 3.4 23.4 5.4 C23 8 21.4 10 19.4 11.8 C18.4 12.8 18 13.6 17.8 14.6 L17.5 17.4 H14 C13.9 15.6 11 15.6 10.8 17.4 H7.4 C7.2 15.6 4.2 15.6 4 17.4 Z" fill="#adb0b2"/><path d="M4.7 5.6 C5 7.4 5.6 8.6 6.6 9.6 C8 9.4 9.4 8.8 10.4 7.8" fill="none" stroke="#3c3f41" stroke-width="0.8"/><circle cx="15.7" cy="7.1" r="0.6" fill="#3c3f41"/></svg>
<div class="vt" id="r1" style="left:1507px;top:180px;transform:rotate(90deg);letter-spacing:-0.041px;">Gradle</div>
<svg style="left:1489px;top:771px;" width="16" height="22" viewBox="0 0 16 22"><rect x="1.2" y="1.2" width="13.2" height="19.4" rx="1.8" fill="none" stroke="#b0b3b5" stroke-width="2.2"/><path d="M1.2 4.4 H14.4 M1.2 16.6 H14.4" stroke="#b0b3b5" stroke-width="1.6"/><rect x="9" y="17.6" width="3" height="1.6" fill="#b0b3b5"/></svg>
<div class="vt" id="r2" style="left:1507px;top:800px;transform:rotate(90deg);letter-spacing:0.039px;">Device File Explorer</div>


<!-- BOTTOM BARS -->
<div class="a" style="left:86px;top:995.4px;width:1428px;height:67px;background:#3c3f41;"></div>
<div class="a" style="left:86px;top:995.4px;width:1428px;height:1px;background:#323435;"></div>
<div class="a" style="left:86px;top:1028px;width:1428px;height:1px;background:#353739;"></div>
<svg style="left:135px;top:1006px;" width="17" height="13" viewBox="0 0 17 13"><path d="M0 1.4 H3.4 M5.4 1.4 H17 M0 6.5 H3.4 M5.4 6.5 H17 M0 11.6 H3.4 M5.4 11.6 H17" stroke="#b0b3b5" stroke-width="2.6"/></svg>
<div class="bt" id="b1" style="left:161.00px;top:1002px;letter-spacing:-0.948px;">TODO</div>
<svg style="left:249px;top:1004px;" width="18" height="18" viewBox="0 0 18 18"><path d="M1.7 0.6 V17.4" stroke="#b0b3b5" stroke-width="3.2"/><path d="M1.6 11.4 H11.6 V5" fill="none" stroke="#b0b3b5" stroke-width="3"/><path d="M6 7 L11.6 0.6 L17.2 7 Z" fill="#b0b3b5"/></svg>
<div class="bt" id="b2" style="left:272.90px;top:1002px;letter-spacing:0.241px;"><u>9</u>: Version Control</div>
<svg style="left:468px;top:1003px;" width="21" height="19" viewBox="0 0 27 24"><path d="M1.6 9.6 L9.5 1 L15.7 1.2 L11.1 5.9 L15.6 10 L17.2 10.9 L24.8 18.8 L21 22.8 L13.4 15.3 L12.6 13.8 L8.3 9.3 L4.5 13 Z" fill="#b0b3b5"/></svg>
<div class="bt" id="b3" style="left:494.00px;top:1002px;letter-spacing:0.126px;">Build</div>
<svg style="left:571px;top:1007px;" width="18" height="13" viewBox="0 0 18 13"><path d="M0 1.4 H18 M0 6.4 H11 M0 11.4 H14.6" stroke="#b0b3b5" stroke-width="2.6"/></svg>
<div class="bt" id="b4" style="left:595.70px;top:1002px;letter-spacing:0.338px;"><u>6</u>: Logcat</div>
<svg style="left:713px;top:1004.5px;" width="18" height="16" viewBox="0 0 18 16"><rect x="0" y="0" width="17.6" height="15.6" rx="1" fill="#b0b3b5"/><path d="M3 3.4 L7.4 7.4 L3 11.4" fill="none" stroke="#3c3f41" stroke-width="1.7"/><path d="M8.6 11.6 H14" stroke="#3c3f41" stroke-width="1.7"/></svg>
<div class="bt" id="b5" style="left:740.00px;top:1002px;letter-spacing:0.048px;">Terminal</div>
<svg style="left:1139px;top:1003px;" width="21" height="19" viewBox="0 0 21 19"><path d="M10.4 1.2 A8.4 8.4 0 1 0 10.4 18 H19 V9.6 A8.4 8.4 0 0 0 10.4 1.2 Z" fill="none" stroke="#b0b3b5" stroke-width="2"/></svg>
<div class="bt" id="b6" style="left:1165.00px;top:1002px;letter-spacing:-0.031px;">Event Log</div>
<svg style="left:1287px;top:1003px;" width="21" height="19" viewBox="0 0 21 19"><path d="M0.8 9 V0.8 H13.6" fill="none" stroke="#b0b3b5" stroke-width="1.6"/><path d="M4.6 13.4 V4.6 H18 V8" fill="none" stroke="#b0b3b5" stroke-width="1.8"/><circle cx="12.6" cy="11.6" r="3.6" fill="none" stroke="#b0b3b5" stroke-width="1.8"/><path d="M15.2 14.2 L19.6 18.4" stroke="#b0b3b5" stroke-width="2"/></svg>
<div class="bt" id="b7" style="left:1313.00px;top:1002px;letter-spacing:-0.129px;">Layout Inspector</div>
<!-- status bar -->
<svg style="left:95px;top:1037px;" width="20" height="20" viewBox="0 0 20 20"><rect x="4.4" y="0.8" width="14.4" height="14.4" fill="none" stroke="#a9acae" stroke-width="1.5"/><path d="M0.8 5 V18.8 H14.6" fill="none" stroke="#a9acae" stroke-width="1.5"/></svg>
<div class="bt" id="s1" style="left:134.40px;top:1035.5px;font-size:17.2px;letter-spacing:0.070px;">Gradle sync finished in 15 s 31 ms (moments ago)</div>
<div class="bt" id="s2" style="left:781.30px;top:1035.5px;font-size:17.2px;letter-spacing:0.220px;">167 chars, 8 line breaks</div>
<div class="bt" id="s3" style="left:1023.40px;top:1035.5px;font-size:17.2px;letter-spacing:-0.199px;">124:1</div>
<div class="bt" id="s4" style="left:1090.00px;top:1035.5px;font-size:17.2px;letter-spacing:3.124px;">LF</div>
<div class="bt" id="s5" style="left:1130.00px;top:1035.5px;font-size:17.2px;letter-spacing:1.883px;">UTF-8</div>
<div class="bt" id="s6" style="left:1206.00px;top:1035.5px;font-size:17.2px;letter-spacing:0.554px;">4 spaces</div>
<div class="bt" id="s7" style="left:1304.50px;top:1035.5px;font-size:17.2px;letter-spacing:0.401px;">Git: fix-crash</div>
<svg style="left:1437px;top:1035px;" width="19" height="18" viewBox="0 0 19 18"><rect x="6.4" y="8" width="12" height="9.6" fill="#c9cbcc"/><path d="M1.2 8.4 V5.4 A3.6 3.6 0 0 1 8.4 5.4 V8.4" fill="none" stroke="#c9cbcc" stroke-width="2"/></svg>
<svg style="left:1475px;top:1033px;" width="21" height="21" viewBox="0 0 21 21"><path d="M5.4 6 V2.6 A1.6 1.6 0 0 1 7 1 H14 A1.6 1.6 0 0 1 15.6 2.6 V6 Z" fill="#b0b3b5"/><path d="M0.4 7.4 H20.6" stroke="#b0b3b5" stroke-width="2"/><path d="M4.6 9 H16.4 V12.4 A5.9 5.9 0 0 1 4.6 12.4 Z" fill="#b0b3b5"/><circle cx="8" cy="11.4" r="1.5" fill="#3c3f41"/><circle cx="13" cy="11.4" r="1.5" fill="#3c3f41"/><path d="M7.6 14.6 Q10.5 16.8 13.4 14.6" fill="none" stroke="#3c3f41" stroke-width="1.2"/><path d="M2.4 20.6 Q3 17.6 6 17 L10.5 19.4 L15 17 Q18 17.6 18.6 20.6 Z" fill="#b0b3b5"/></svg>


</div><div class="a" style="left:0;top:0;width:1428px;height:1006px;border-radius:8.5px 8.5px 6px 6px;box-shadow:inset 0 0 0 1px rgba(255,255,255,0.17),inset 0 2px 0 0 rgba(255,255,255,0.16);pointer-events:none;"></div></div>
</body>
</html>
